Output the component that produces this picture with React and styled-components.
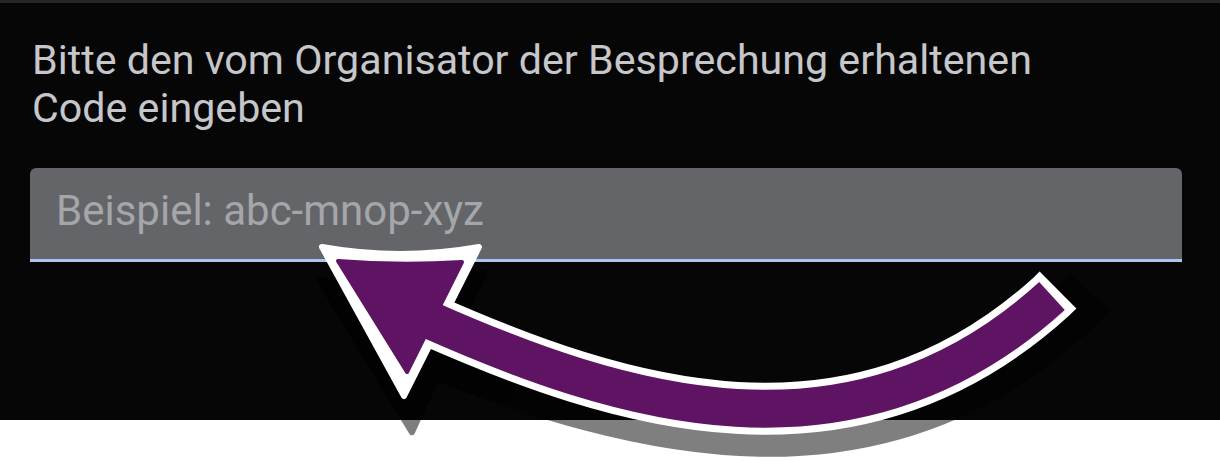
import React from "react";
import styled, { createGlobalStyle } from "styled-components";

const GlobalStyle = createGlobalStyle`
  body {
    margin: 0;
    background: #ffffff;
    font-family: Roboto, "Noto Sans", sans-serif;
  }
`;

const Page = styled.div`
  position: relative;
  width: 1220px;
  height: 461px;
  overflow: hidden;
  background: #ffffff;
`;

const TopBar = styled.div`
  height: 3px;
  background: #232529;
`;

const Panel = styled.section`
  height: 417px;
  box-sizing: border-box;
  padding: 33px 38px 0 30px;
  background: #060606;
`;

const Prompt = styled.p`
  margin: 0 0 0 2px;
  max-width: 1060px;
  font-size: 41.2px;
  line-height: 48px;
  color: #c6c7ca;
`;

const CodeInput = styled.input`
  display: block;
  width: 100%;
  height: 94px;
  margin-top: 36px;
  box-sizing: border-box;
  padding: 0 26px 7px;
  border: none;
  border-bottom: 3px solid #a9c4f1;
  border-radius: 6px 6px 0 0;
  background: #636569;
  font-family: Roboto, "Noto Sans", sans-serif;
  font-size: 42px;
  color: #e0e0e0;
  outline: none;

  &::placeholder {
    color: #a4a6a9;
  }
`;

const Overlay = styled.svg`
  position: absolute;
  top: 0;
  left: 0;
  pointer-events: none;
`;

// arrow shapes in page coordinates
const shaft = "M 425 318 C 620 405, 852 478, 1052 296";
const shaftOuter = "M 425 318 C 620 405, 852 478, 1052 296 L 1058 290";
const headOuter = "M 322 247 Q 400 261 479 247 L 404 396 Z";
const headInner = "M 338 261 Q 400 266 462 262 L 407 372 Z";

const Arrow = () => (
  <Overlay width="1220" height="461" viewBox="0 0 1220 461">
    <g
      opacity="0.5"
      transform="translate(413 432) rotate(-2.45) scale(1.045) translate(-405 -396)"
    >
      <path d={shaftOuter} fill="none" stroke="#000" strokeWidth="52" />
      <path d={headOuter} fill="#000" stroke="#000" strokeWidth="6" strokeLinejoin="round" />
    </g>
    <path d={shaftOuter} fill="none" stroke="#fff" strokeWidth="52" />
    <path d={headOuter} fill="#fff" stroke="#fff" strokeWidth="6" strokeLinejoin="round" />
    <path d={shaft} fill="none" stroke="#5e1363" strokeWidth="38" />
    <path d={headInner} fill="#5e1363" stroke="#5e1363" strokeWidth="4" strokeLinejoin="round" />
  </Overlay>
);

export default function App() {
  return (
    <>
      <GlobalStyle />
      <Page>
        <TopBar />
        <Panel>
          <Prompt>
            Bitte den vom Organisator der Besprechung erhaltenen Code eingeben
          </Prompt>
          <CodeInput placeholder="Beispiel: abc-mnop-xyz" />
        </Panel>
        <Arrow />
      </Page>
    </>
  );
}
